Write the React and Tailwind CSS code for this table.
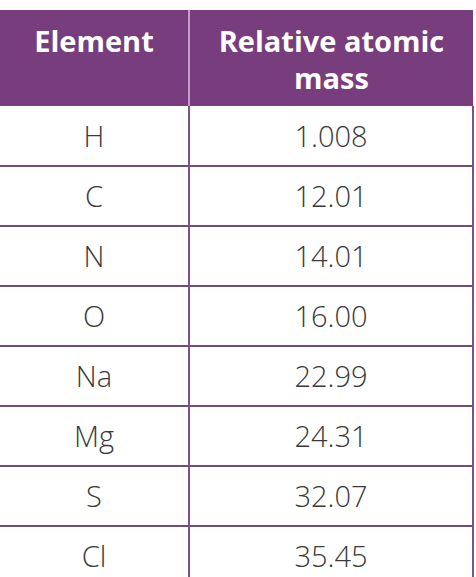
const rows = [
  ["H", "1.008"],
  ["C", "12.01"],
  ["N", "14.01"],
  ["O", "16.00"],
  ["Na", "22.99"],
  ["Mg", "24.31"],
  ["S", "32.07"],
  ["Cl", "35.45"],
];

export default function App() {
  return (
    <div className="h-[577px] w-[476px] overflow-hidden bg-white pt-[10px] font-['Open_Sans',sans-serif]">
      <table className="w-[474px] border-collapse">
        <thead>
          <tr className="h-[96px] bg-[#773d7d] text-white">
            <th className="w-[189px] border-r-2 border-[#c79bcf] pt-[12px] align-top text-[29px] font-bold leading-[37px]">
              Element
            </th>
            <th className="pt-[12px] align-top text-[29px] font-bold leading-[37px]">
              Relative atomic
              <br />
              mass
            </th>
          </tr>
        </thead>
        <tbody>
          {rows.map(([el, mass]) => (
            <tr key={el} className="h-[60px] border-b-2 border-[#6f4f7a] text-[29px] font-light text-[#3a3a3a]">
              <td className="border-r-2 border-[#7b5187] text-center">{el}</td>
              <td className="border-r-2 border-[#7b5187] text-center">{mass}</td>
            </tr>
          ))}
        </tbody>
      </table>
    </div>
  );
}
